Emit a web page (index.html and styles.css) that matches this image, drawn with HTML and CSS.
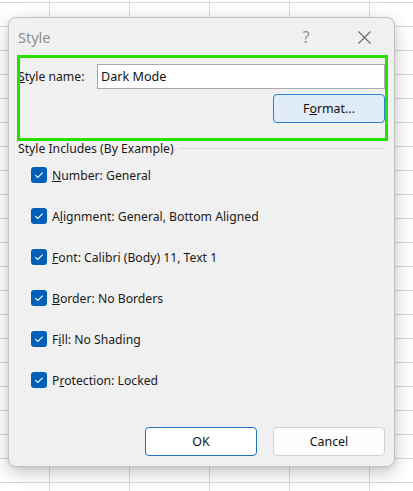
FILE: index.html
```html
<!DOCTYPE html>
<html lang="en">
<head>
<meta charset="utf-8">
<title>Style</title>
<link rel="stylesheet" href="styles.css">
</head>
<body>
<div class="dialog">
  <div class="titlebar">
    <span class="title">Style</span>
    <span class="help">?</span>
    <span class="close">
      <svg width="13" height="13" viewBox="0 0 13 13"><path d="M0.5 0.5 L12.5 12.5 M12.5 0.5 L0.5 12.5" stroke="#6a6a6a" stroke-width="1.1" fill="none"/></svg>
    </span>
  </div>
  <div class="body">
    <div class="name-row">
      <span class="label"><u>S</u>tyle name:</span>
      <div class="input">Dark Mode</div>
    </div>
    <div class="format-row">
      <button class="btn btn-format">F<u>o</u>rmat...</button>
    </div>
    <div class="group-header">
      <span>Style Includes (By Example)</span>
      <span class="rule"></span>
    </div>
    <ul class="checks">
      <li class="check"><span class="box"><svg width="16" height="16" viewBox="0 0 16 16"><path d="M4.3 8.2 L6.8 10.5 L11.7 5.6" stroke="#fff" stroke-width="1.1" fill="none"/></svg></span><span><u>N</u>umber: General</span></li>
      <li class="check"><span class="box"><svg width="16" height="16" viewBox="0 0 16 16"><path d="M4.3 8.2 L6.8 10.5 L11.7 5.6" stroke="#fff" stroke-width="1.1" fill="none"/></svg></span><span>A<u>l</u>ignment: General, Bottom Aligned</span></li>
      <li class="check"><span class="box"><svg width="16" height="16" viewBox="0 0 16 16"><path d="M4.3 8.2 L6.8 10.5 L11.7 5.6" stroke="#fff" stroke-width="1.1" fill="none"/></svg></span><span><u>F</u>ont: Calibri (Body) 11, Text 1</span></li>
      <li class="check"><span class="box"><svg width="16" height="16" viewBox="0 0 16 16"><path d="M4.3 8.2 L6.8 10.5 L11.7 5.6" stroke="#fff" stroke-width="1.1" fill="none"/></svg></span><span><u>B</u>order: No Borders</span></li>
      <li class="check"><span class="box"><svg width="16" height="16" viewBox="0 0 16 16"><path d="M4.3 8.2 L6.8 10.5 L11.7 5.6" stroke="#fff" stroke-width="1.1" fill="none"/></svg></span><span>F<u>i</u>ll: No Shading</span></li>
      <li class="check"><span class="box"><svg width="16" height="16" viewBox="0 0 16 16"><path d="M4.3 8.2 L6.8 10.5 L11.7 5.6" stroke="#fff" stroke-width="1.1" fill="none"/></svg></span><span>P<u>r</u>otection: Locked</span></li>
    </ul>
    <div class="actions">
      <button class="btn btn-ok">OK</button>
      <button class="btn btn-cancel">Cancel</button>
    </div>
  </div>
  <div class="highlight"></div>
</div>
</body>
</html>
```
FILE: styles.css
```css
* { box-sizing: border-box; }
html, body { margin: 0; padding: 0; }
body {
  width: 413px;
  height: 491px;
  overflow: hidden;
  font-family: "Noto Sans", "Open Sans", sans-serif;
  font-size: 12.2px;
  color: #1a1a1a;
  background-color: #ffffff;
  background-image:
    linear-gradient(to right, #d9d9d9 1px, transparent 1px),
    linear-gradient(to bottom, #d9d9d9 1px, transparent 1px);
  background-size: 80px 100%, 100% 24px;
  background-position: 49px 0, 0 2px;
  padding-top: 17px;
  padding-left: 8px;
}
.dialog {
  position: relative;
  width: 387px;
  height: 450px;
  background: #f0f0f0;
  border: 1px solid #c4c4c4;
  border-radius: 8px;
  box-shadow: 0 6px 18px rgba(0,0,0,0.22), 0 1px 4px rgba(0,0,0,0.08);
  display: flex;
  flex-direction: column;
}
.titlebar {
  height: 38px;
  display: flex;
  align-items: center;
  padding-right: 7px;
}
.title {
  margin-left: 9px;
  font-size: 14.5px;
  color: #8e8e8e;
  flex: 1;
}
.help {
  width: 40px;
  text-align: center;
  font-size: 15.5px;
  color: #8e8e8e;
}
.close {
  width: 46px;
  margin-left: 15px;
  display: flex;
  justify-content: center;
  align-items: center;
}
.body {
  flex: 1;
  display: flex;
  flex-direction: column;
  padding: 8px 9px 10px 9px;
}
.name-row {
  display: flex;
  align-items: center;
  height: 25px;
}
.label {
  width: 79px;
}
.input {
  flex: 1;
  height: 25px;
  background: #ffffff;
  border: 1px solid #a9a9a9;
  padding: 0 3px;
  display: flex;
  align-items: center;
  font-size: 12.6px;
  color: #111;
}
.format-row {
  display: flex;
  justify-content: flex-end;
  margin-top: 5px;
}
.btn {
  font-family: inherit;
  font-size: 12.4px;
  color: #111;
  height: 29px;
  width: 112px;
  border-radius: 4px;
  padding: 0;
  cursor: default;
}
.btn-format {
  background: #e0edf9;
  border: 1px solid #2a7fd0;
}
.group-header {
  margin-top: 17px;
  height: 16px;
  display: flex;
  align-items: center;
  gap: 6px;
}
.rule {
  flex: 1;
  height: 1px;
  background: #d8d8d8;
}
.checks {
  list-style: none;
  margin: 9px 0 0 0;
  padding: 0 0 0 13px;
  display: flex;
  flex-direction: column;
  gap: 21px;
}
.check {
  height: 20px;
  display: flex;
  align-items: center;
  gap: 5px;
}
.box {
  width: 16px;
  height: 16px;
  border-radius: 3px;
  background: #005fb8;
  display: flex;
}
.actions {
  margin-top: auto;
  display: flex;
  justify-content: flex-end;
  gap: 16px;
}
.btn-ok {
  background: #ffffff;
  border: 1px solid #1f6fc5;
}
.btn-cancel {
  background: #fdfdfd;
  border: 1px solid #d2d2d2;
}
.highlight {
  position: absolute;
  left: 8px;
  top: 37px;
  width: 371px;
  height: 86px;
  border: 3px solid #28e000;
  pointer-events: none;
}
```
